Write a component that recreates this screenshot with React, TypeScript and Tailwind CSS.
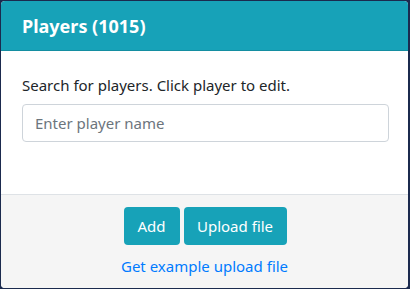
import React from "react";

export default function App() {
  return (
    <div className="w-[410px] h-[289px] bg-[#1b2a4e] p-px" style={{ fontFamily: '"Segoe UI", "Noto Sans", sans-serif' }}>
      <div className="w-[407px] h-[287px] rounded-[4px] overflow-hidden bg-white flex flex-col">
        <div className="h-[50px] bg-[#17a2b8] border-b border-[#148ea1] flex items-center px-[21px] pt-[1px]">
          <h5 className="text-white text-[18px] font-bold leading-none">Players (1015)</h5>
        </div>
        <div className="h-[143px] px-[21px] pt-[22px]">
          <p className="text-[#212529] text-[15px] leading-[24px]">Search for players. Click player to edit.</p>
          <input
            placeholder="Enter player name"
            className="mt-[7px] w-[367px] h-[38px] border border-[#ced4da] rounded-[4px] px-[12px] text-[15px] placeholder:text-[#6c757d] outline-none"
          />
        </div>
        <div className="flex-1 bg-[#f5f5f5] border-t border-[#dee2e6] flex flex-col items-center pt-[12px]">
          <div className="flex gap-[4px] pl-[1px]">
            <button className="h-[38px] w-[56px] rounded-[4px] bg-[#17a2b8] text-white text-[15px]">Add</button>
            <button className="h-[38px] w-[103px] rounded-[4px] bg-[#17a2b8] text-white text-[15px]">Upload file</button>
          </div>
          <a className="mt-[10px] text-[#007bff] text-[15px] leading-[22px]">Get example upload file</a>
        </div>
      </div>
    </div>
  );
}
